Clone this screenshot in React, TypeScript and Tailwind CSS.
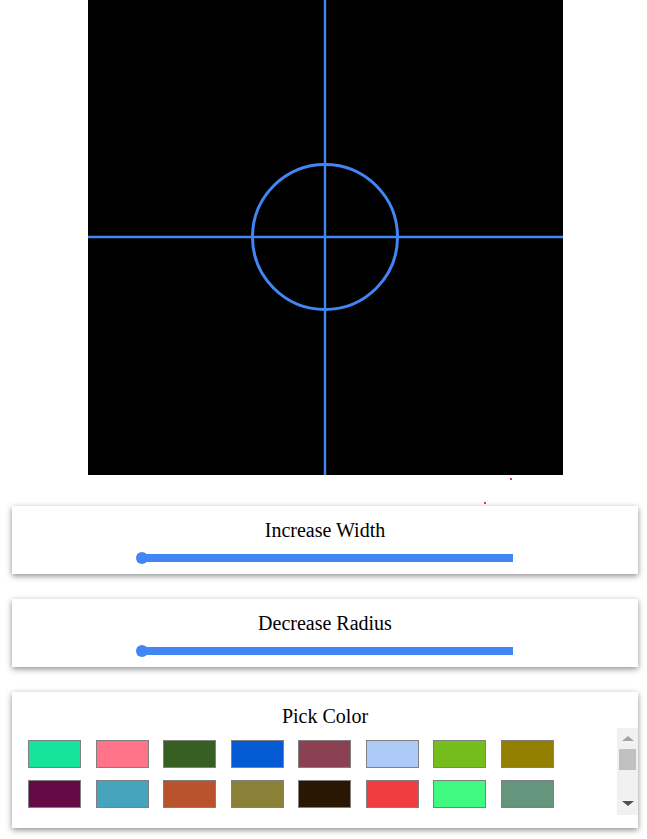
import React from 'react';

const SWATCHES = [
  '#17e49c', '#ff7489', '#375f23', '#055bd3', '#8c4152', '#aecbf7', '#74bd1d', '#948000',
  '#650a44', '#46a5bd', '#b9532d', '#8a8038', '#291603', '#f23d3e', '#3ffa7f', '#66957d',
  '#c2a83e', '#3b6ea5', '#e07a5f', '#81b29a', '#6d597a', '#f2cc8f', '#2a9d8f', '#e76f51',
  '#264653', '#8ab17d', '#b56576', '#457b9d', '#ffb703', '#023047', '#9b5de5', '#00bbf9',
];

const BLUE = '#4285f4';

const Slider: React.FC<{ label: string }> = ({ label }) => (
  <div className="bg-white shadow-[0_2px_6px_rgba(0,0,0,0.45)] pt-[13px] pb-[10px] flex flex-col items-center">
    <div className="text-[20px] leading-[22px] text-black">{label}</div>
    <div className="relative w-3/5 h-3 mt-[11px] flex items-center">
      <div className="w-full h-2 bg-[#4285f4]" />
      <div className="absolute left-[-1px] top-0 w-3 h-3 rounded-full bg-[#4285f4]" />
    </div>
  </div>
);

// native scrollbar is hidden in the headless shot, so draw the classic one
const FakeScrollbar = () => (
  <div className="absolute right-0 top-0 w-[21px] h-full bg-[#f1f1f1] flex flex-col items-center">
    <div className="mt-[8px] w-0 h-0 border-l-[6px] border-r-[6px] border-b-[5px] border-l-transparent border-r-transparent border-b-[#a3a3a3]" />
    <div className="mt-[8px] w-[17px] h-[21px] bg-[#c1c1c1]" />
    <div className="mt-auto mb-[9px] w-0 h-0 border-l-[6px] border-r-[6px] border-t-[5px] border-l-transparent border-r-transparent border-t-[#505050]" />
  </div>
);

export default function App() {
  return (
    <div className="w-[647px] h-[839px] bg-white font-['Liberation_Serif',serif] relative">
      <div className="ml-[88px] w-[475px] h-[475px] bg-black">
        <svg width="475" height="475" viewBox="0 0 475 475">
          <line x1="237" y1="0" x2="237" y2="475" stroke={BLUE} strokeWidth="2.4" />
          <line x1="0" y1="237" x2="475" y2="237" stroke={BLUE} strokeWidth="2.4" />
          <circle cx="237" cy="237" r="72.5" fill="none" stroke={BLUE} strokeWidth="3" />
        </svg>
      </div>
      <div className="absolute left-[510px] top-[478px] w-[2px] h-[2px] bg-[#e53935]" />
      <div className="absolute left-[484px] top-[502px] w-[2px] h-[2px] bg-[#e53935]" />

      <div className="ml-[12px] w-[626px] mt-[31px] flex flex-col gap-[25px]">
        <Slider label="Increase Width" />
        <Slider label="Decrease Radius" />
        <div className="bg-white shadow-[0_2px_6px_rgba(0,0,0,0.45)] pt-[13px] pb-[13px] flex flex-col">
          <div className="text-[20px] leading-[23px] text-black text-center">Pick Color</div>
          <div className="relative h-[87px]">
            <div className="h-full overflow-y-scroll [scrollbar-width:none] pt-3 pl-4">
              <div className="grid grid-cols-[repeat(8,53px)] gap-x-[14.5px] gap-y-3 pb-3">
                {SWATCHES.map((c, i) => (
                  <div key={i} className="h-[28px] border border-[#808080]" style={{ backgroundColor: c }} />
                ))}
              </div>
            </div>
            <FakeScrollbar />
          </div>
        </div>
      </div>
    </div>
  );
}
